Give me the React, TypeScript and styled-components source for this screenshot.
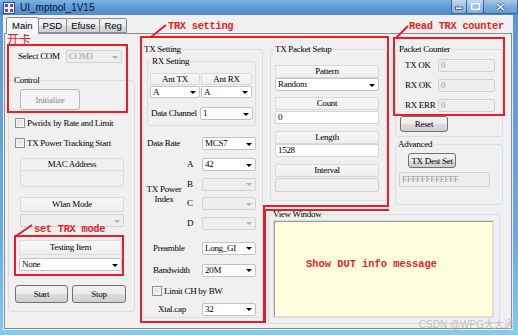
import React from 'react';
import styled, { createGlobalStyle } from 'styled-components';

const GlobalStyle = createGlobalStyle`
  html, body { margin: 0; padding: 0; background: #ffffff; }
  body {
    font-family: "Liberation Serif", "Times New Roman", serif;
    font-size: 9px;
    letter-spacing: -0.3px;
    color: #000;
  }
  * { box-sizing: border-box; }
`;

const Screen = styled.div`
  position: relative;
  width: 518px;
  height: 335px;
  overflow: hidden;
  display: flex;
  flex-direction: column;
  background: linear-gradient(180deg, #5b98d6 0%, #69a9e0 70%, #7fcdf2 100%);
`;

/* ---------- title bar ---------- */
const TitleBar = styled.div`
  height: 15px;
  flex-shrink: 0;
  display: flex;
  align-items: center;
  padding-left: 3px;
  background: linear-gradient(180deg, #7db2e6 0%, #5a97d6 55%, #4d8bcf 100%);
`;

const TitleText = styled.span`
  margin-left: 5px;
  font-family: "Liberation Sans", Arial, sans-serif;
  font-size: 10px;
  letter-spacing: 0;
  color: #06152b;
`;

const WinButtons = styled.div`
  margin-left: auto;
  align-self: flex-start;
  display: flex;
  height: 14px;
`;

const WinButton = styled.div<{ $w: number; $close?: boolean }>`
  width: ${p => p.$w}px;
  height: 14px;
  margin-left: -1px;
  border: 1px solid #35669e;
  border-top: none;
  border-radius: ${p => (p.$close ? '0 0 0 3px' : '0 0 3px 3px')};
  background: ${p =>
    p.$close
      ? 'linear-gradient(180deg, #a9c8ea 0%, #7eaadd 50%, #6a99d3 100%)'
      : 'linear-gradient(180deg, #c4dbf3 0%, #9cbfe7 50%, #86b0e0 100%)'};
  display: flex;
  align-items: center;
  justify-content: center;
`;

/* ---------- client + tabs ---------- */
const Client = styled.div`
  flex: 1;
  margin: 0 5px 5px 3px;
  padding: 0 1px 1px 1px;
  background: #f0f0f0;
  display: flex;
  flex-direction: column;
`;

const TabStrip = styled.div`
  height: 18px;
  display: flex;
  align-items: flex-end;
  padding-left: 2px;
`;

const Tab = styled.div<{ $active?: boolean }>`
  height: ${p => (p.$active ? 17 : 15)}px;
  margin-bottom: ${p => (p.$active ? -1 : 0)}px;
  margin-right: -1px;
  padding: ${p => (p.$active ? '2px 5px 0' : '1px 4px 0')};
  position: relative;
  z-index: ${p => (p.$active ? 2 : 1)};
  border: 1px solid #898c95;
  border-bottom: ${p => (p.$active ? 'none' : '1px solid #898c95')};
  border-radius: 2px 2px 0 0;
  background: ${p =>
    p.$active ? '#f7f7f7' : 'linear-gradient(180deg, #f2f2f2 0%, #ebebeb 50%, #dddddd 51%, #cfcfcf 100%)'};
  font-family: "Liberation Sans", Arial, sans-serif;
  font-size: 9.5px;
  letter-spacing: 0;
  line-height: 12px;
`;

const TabPage = styled.div`
  flex: 1;
  border: 1px solid #898c95;
  background: #f0f0f0;
  display: grid;
  grid-template-columns: 132px 130px 125px 116px;
  grid-template-rows: 163px 1fr;
  padding-top: 10px;
  align-items: start;
`;

/* ---------- generic dialog parts ---------- */
const Group = styled.div<{ $mt: number; $ml: number; $w: number; $h: number }>`
  margin-top: ${p => p.$mt}px;
  margin-left: ${p => p.$ml}px;
  width: ${p => p.$w}px;
  height: ${p => p.$h}px;
  border: 1px solid #d5dfe5;
  border-radius: 3px;
  display: flex;
  flex-direction: column;
  align-items: flex-start;
`;

const Legend = styled.span<{ $ml: number }>`
  display: block;
  margin: -6px 0 0 ${p => p.$ml}px;
  padding: 0 1px;
  height: 11px;
  line-height: 11px;
  background: #f0f0f0;
  white-space: nowrap;
`;

const Row = styled.div<{ $mt?: number; $ml?: number; $h?: number }>`
  display: flex;
  align-items: center;
  margin-top: ${p => p.$mt ?? 0}px;
  margin-left: ${p => p.$ml ?? 0}px;
  height: ${p => p.$h ?? 13}px;
  flex-shrink: 0;
`;

const RowLabel = styled.span<{ $w: number }>`
  width: ${p => p.$w}px;
  flex-shrink: 0;
  white-space: nowrap;
  line-height: 11px;
`;

const Combo = styled.div<{ $w: number; $h?: number; $disabled?: boolean }>`
  position: relative;
  width: ${p => p.$w}px;
  height: ${p => p.$h ?? 13}px;
  flex-shrink: 0;
  border: 1px solid ${p => (p.$disabled ? '#d2d2d2' : '#c3c3c3')};
  border-radius: 2px;
  background: ${p => (p.$disabled ? '#eeeeee' : '#ffffff')};
  color: ${p => (p.$disabled ? '#a3a3a3' : '#000')};
  padding-left: 2px;
  line-height: ${p => (p.$h ?? 13) - 2}px;
  white-space: nowrap;
  &::after {
    content: '';
    position: absolute;
    right: 3px;
    top: 50%;
    margin-top: -1px;
    border-left: 3px solid transparent;
    border-right: 3px solid transparent;
    border-top: 3px solid ${p => (p.$disabled ? '#b0b0b0' : '#000')};
  }
`;

const TextBox = styled.div<{ $w: number; $h?: number; $disabled?: boolean }>`
  width: ${p => p.$w}px;
  height: ${p => p.$h ?? 13}px;
  flex-shrink: 0;
  border: 1px solid ${p => (p.$disabled ? '#cfcfcf' : '#d6d6d6')};
  border-radius: ${p => (p.$disabled ? 2 : 0)}px;
  background: ${p => (p.$disabled ? '#efefef' : '#ffffff')};
  color: ${p => (p.$disabled ? '#9a9a9a' : '#000')};
  padding-left: 2px;
  line-height: ${p => (p.$h ?? 13) - 2}px;
  white-space: nowrap;
`;

const Header = styled.div<{ $w: number; $h?: number }>`
  width: ${p => p.$w}px;
  height: ${p => p.$h ?? 13}px;
  flex-shrink: 0;
  border: 1px solid #dadada;
  border-radius: 2px;
  background: linear-gradient(180deg, #f7f7f7 0%, #efefef 100%);
  text-align: center;
  line-height: ${p => (p.$h ?? 13) - 2}px;
  white-space: nowrap;
`;

const StackBox = styled.div<{ $mt: number; $ml: number; $w: number }>`
  margin-top: ${p => p.$mt}px;
  margin-left: ${p => p.$ml}px;
  width: ${p => p.$w}px;
  display: flex;
  flex-direction: column;
  flex-shrink: 0;
`;

const MacBox = styled.div`
  width: 104px;
  border: 1px solid #dadada;
  border-radius: 3px;
  background: #f0f0f0;
`;

const MacHead = styled.div`
  height: 12px;
  line-height: 11px;
  text-align: center;
  border-bottom: 1px solid #dadada;
`;

const MacBody = styled.div`
  height: 15px;
`;

const Button = styled.div<{ $w: number; $h: number; $disabled?: boolean }>`
  width: ${p => p.$w}px;
  height: ${p => p.$h}px;
  flex-shrink: 0;
  border: 1px solid ${p => (p.$disabled ? '#b5b9bc' : '#707070')};
  border-radius: 3px;
  background: ${p =>
    p.$disabled
      ? '#f4f4f4'
      : 'linear-gradient(180deg, #f2f2f2 0%, #ebebeb 50%, #dddddd 51%, #cfcfcf 100%)'};
  color: ${p => (p.$disabled ? '#8a8a8a' : '#000')};
  display: flex;
  align-items: center;
  justify-content: center;
  white-space: nowrap;
`;

const CheckBox = styled.span`
  width: 10px;
  height: 10px;
  margin-right: 2px;
  flex-shrink: 0;
  border: 1px solid #8e8f8f;
  background: linear-gradient(135deg, #dcdcdc 0%, #f6f6f6 100%);
  box-shadow: inset 0 0 0 1px #f4f4f4;
`;

/* ---------- columns ---------- */
const LeftCol = styled.div`
  grid-column: 1;
  grid-row: 1 / 3;
  margin-left: 3px;
  width: 127px;
  display: flex;
  flex-direction: column;
  align-items: flex-start;
`;

const RightCol = styled.div`
  grid-column: 4;
  grid-row: 1;
  display: flex;
  flex-direction: column;
  align-items: flex-start;
`;

const TxSetting = styled(Group)`
  grid-column: 2;
  grid-row: 1 / 3;
`;

const PacketSetup = styled(Group)`
  grid-column: 3;
  grid-row: 1;
`;

const ViewGroup = styled(Group)`
  grid-column: 3 / 5;
  grid-row: 2;
`;

const PowerBlock = styled.div`
  display: flex;
  align-items: center;
  margin-top: 8px;
  margin-left: 4px;
`;

const PowerLabel = styled.div`
  width: 36px;
  text-align: center;
  line-height: 10px;
`;

const PowerRows = styled.div`
  display: flex;
  flex-direction: column;
  gap: 6.5px;
`;

const Letter = styled.span`
  width: 20px;
  padding-left: 5px;
  line-height: 11px;
`;

const ViewBox = styled.div`
  margin: 1px 0 0 5px;
  width: 219px;
  height: 96px;
  background: #ffffdf;
  border: 1px solid;
  border-color: #9b9b9b #e2e2e2 #e2e2e2 #9b9b9b;
  box-shadow: 0 0 0 1px #dcdcdc;
`;

const DutText = styled.div`
  margin: 36px 0 0 31px;
  font-family: "Liberation Mono", "Courier New", monospace;
  font-weight: bold;
  font-size: 10.4px;
  letter-spacing: 0;
  color: #f0202a;
`;

/* ---------- annotations ---------- */
const Overlay = styled.svg`
  position: absolute;
  left: 0;
  top: 0;
  width: 518px;
  height: 335px;
  pointer-events: none;
`;

const Watermark = styled.div`
  position: absolute;
  right: 4px;
  bottom: 4px;
  font-family: "Liberation Sans", "Noto Sans CJK SC", sans-serif;
  font-size: 10px;
  letter-spacing: 0;
  color: rgba(185, 185, 185, 0.9);
`;

const RED = '#ee1d25';

const AppIcon = () => (
  <svg width="12" height="12" viewBox="0 0 12 12">
    <rect x="0.5" y="0.5" width="11" height="11" fill="#e8eef8" stroke="#2c4f8a" />
    <rect x="2" y="2" width="3" height="3" fill="#2a62c4" />
    <rect x="7" y="2" width="3" height="3" fill="#d23a2a" />
    <rect x="2" y="7" width="3" height="3" fill="#d23a2a" />
    <rect x="7" y="7" width="3" height="3" fill="#2a62c4" />
  </svg>
);

const Annotations = () => (
  <Overlay viewBox="0 0 518 335">
    <g fill="none" stroke={RED} strokeWidth="2">
      <rect x="8" y="45" width="119" height="67" />
      <polygon points="141,37 388,37 388,206 264,206 264,322 141,322" />
      <polyline points="389,210 265,210 265,323" />
      <rect x="394" y="38" width="110" height="77" />
      <rect x="15" y="236" width="108" height="39" />
      <line x1="151" y1="37" x2="166" y2="25" />
      <line x1="396" y1="38" x2="408" y2="26" />
      <line x1="16" y1="236" x2="32" y2="225" />
    </g>
    <g fill={RED} fontFamily='"Liberation Mono", "Courier New", monospace' fontWeight="bold" fontSize="10.4">
      <text x="168" y="29">TRX setting</text>
      <text x="409" y="29">Read TRX counter</text>
      <text x="34" y="232">set TRX mode</text>
    </g>
    <text x="7" y="43.5" fill={RED} fontFamily='"Noto Sans CJK SC", sans-serif' fontSize="12">开卡</text>
  </Overlay>
);

export default function App() {
  return (
    <>
      <GlobalStyle />
      <Screen>
        <TitleBar>
          <AppIcon />
          <TitleText>UI_mptool_1V15</TitleText>
          <WinButtons>
            <WinButton $w={16}>
              <svg width="8" height="6" viewBox="0 0 8 6">
                <rect x="0.5" y="3" width="7" height="2.5" fill="#fff" stroke="#2d4d78" strokeWidth="0.8" />
              </svg>
            </WinButton>
            <WinButton $w={18}>
              <svg width="9" height="7" viewBox="0 0 9 7">
                <rect x="0.5" y="0.5" width="8" height="6" fill="none" stroke="#fff" strokeWidth="1.5" />
              </svg>
            </WinButton>
            <WinButton $w={35} $close>
              <svg width="9" height="8" viewBox="0 0 9 8">
                <path d="M1 1 L8 7 M8 1 L1 7" stroke="#2d4d78" strokeWidth="2.6" />
                <path d="M1 1 L8 7 M8 1 L1 7" stroke="#fff" strokeWidth="1.6" />
              </svg>
            </WinButton>
          </WinButtons>
        </TitleBar>

        <Client>
          <TabStrip>
            <Tab $active>Main</Tab>
            <Tab>PSD</Tab>
            <Tab>Efuse</Tab>
            <Tab>Reg</Tab>
          </TabStrip>

          <TabPage>
            <LeftCol>
              <Row $mt={6} $ml={10}>
                <RowLabel $w={48}>Select COM</RowLabel>
                <Combo $w={56} $disabled>COM3</Combo>
              </Row>
              <Group $mt={17} $ml={0} $w={127} $h={232}>
                <Legend $ml={4}>Control</Legend>
                <Row $mt={3} $ml={11} $h={21}>
                  <Button $w={60} $h={21} $disabled>Initialize</Button>
                </Row>
                <Row $mt={7} $ml={6} $h={11}>
                  <CheckBox />
                  <span>Pwridx by Rate and Limit</span>
                </Row>
                <Row $mt={9} $ml={6} $h={11}>
                  <CheckBox />
                  <span>TX Power Tracking Start</span>
                </Row>
                <StackBox $mt={10} $ml={11} $w={104}>
                  <MacBox>
                    <MacHead>MAC Address</MacHead>
                    <MacBody />
                  </MacBox>
                </StackBox>
                <StackBox $mt={10} $ml={11} $w={104}>
                  <Header $w={104} $h={15}>Wlan Mode</Header>
                  <Row $mt={2}>
                    <Combo $w={104} $disabled />
                  </Row>
                </StackBox>
                <StackBox $mt={13} $ml={10} $w={103}>
                  <Header $w={103} $h={15}>Testing Item</Header>
                  <Row $mt={3}>
                    <Combo $w={103}>None</Combo>
                  </Row>
                </StackBox>
                <Row $mt={14} $ml={6} $h={18}>
                  <Button $w={53} $h={18}>Start</Button>
                  <Button $w={54} $h={18} style={{ marginLeft: 4 }}>Stop</Button>
                </Row>
              </Group>
            </LeftCol>

            <TxSetting $mt={5} $ml={4} $w={122} $h={269}>
              <Legend $ml={1}>TX Setting</Legend>
              <Group $mt={6} $ml={5} $w={109} $h={65}>
                <Legend $ml={3}>RX Setting</Legend>
                <Row $mt={6} $ml={2} $h={12}>
                  <Header $w={50} $h={12}>Ant TX</Header>
                  <Header $w={51} $h={12} style={{ marginLeft: 1 }}>Ant RX</Header>
                </Row>
                <Row $mt={1} $ml={2} $h={12}>
                  <Combo $w={50} $h={12}>A</Combo>
                  <Combo $w={51} $h={12} style={{ marginLeft: 1 }}>A</Combo>
                </Row>
                <Row $mt={9} $ml={3}>
                  <RowLabel $w={49}>Data Channel</RowLabel>
                  <Combo $w={53}>1</Combo>
                </Row>
              </Group>
              <Row $mt={11} $ml={5}>
                <RowLabel $w={55}>Data Rate</RowLabel>
                <Combo $w={54}>MCS7</Combo>
              </Row>
              <PowerBlock>
                <PowerLabel>
                  TX Power
                  <br />
                  Index
                </PowerLabel>
                <PowerRows>
                  <Row>
                    <Letter>A</Letter>
                    <Combo $w={54}>42</Combo>
                  </Row>
                  <Row>
                    <Letter>B</Letter>
                    <Combo $w={54} $disabled />
                  </Row>
                  <Row>
                    <Letter>C</Letter>
                    <Combo $w={54} $disabled />
                  </Row>
                  <Row>
                    <Letter>D</Letter>
                    <Combo $w={54} $disabled />
                  </Row>
                </PowerRows>
              </PowerBlock>
              <Row $mt={12} $ml={11}>
                <RowLabel $w={49}>Preamble</RowLabel>
                <Combo $w={54}>Long_GI</Combo>
              </Row>
              <Row $mt={9} $ml={11}>
                <RowLabel $w={49}>Bandwidth</RowLabel>
                <Combo $w={54}>20M</Combo>
              </Row>
              <Row $mt={9} $ml={10} $h={11}>
                <CheckBox />
                <span>Limit CH by BW</span>
              </Row>
              <Row $mt={6} $ml={16}>
                <RowLabel $w={44}>Xtal.cap</RowLabel>
                <Combo $w={54}>32</Combo>
              </Row>
            </TxSetting>

            <PacketSetup $mt={5} $ml={3} $w={117} $h={152}>
              <Legend $ml={3}>TX Packet Setup</Legend>
              <StackBox $mt={10} $ml={4} $w={104}>
                <Header $w={104}>Pattern</Header>
                <Combo $w={104}>Random</Combo>
              </StackBox>
              <StackBox $mt={6} $ml={4} $w={104}>
                <Header $w={104}>Count</Header>
                <Row $mt={1}>
                  <TextBox $w={104}>0</TextBox>
                </Row>
              </StackBox>
              <StackBox $mt={7} $ml={4} $w={104}>
                <Header $w={104}>Length</Header>
                <TextBox $w={104}>1528</TextBox>
              </StackBox>
              <StackBox $mt={7} $ml={4} $w={104}>
                <Header $w={104}>Interval</Header>
                <Row $mt={1} $h={14}>
                  <TextBox $w={104} $h={14} $disabled />
                </Row>
              </StackBox>
            </PacketSetup>

            <RightCol>
              <Group $mt={5} $ml={3} $w={108} $h={88}>
                <Legend $ml={2}>Packet Counter</Legend>
                <Row $mt={4} $ml={9}>
                  <RowLabel $w={33}>TX OK</RowLabel>
                  <TextBox $w={57} $disabled>0</TextBox>
                </Row>
                <Row $mt={7} $ml={9}>
                  <RowLabel $w={33}>RX OK</RowLabel>
                  <TextBox $w={57} $disabled>0</TextBox>
                </Row>
                <Row $mt={7} $ml={9}>
                  <RowLabel $w={33}>RX ERR</RowLabel>
                  <TextBox $w={57} $disabled>0</TextBox>
                </Row>
                <Row $mt={4} $ml={4} $h={16}>
                  <Button $w={48} $h={16}>Reset</Button>
                </Row>
              </Group>
              <Group $mt={7} $ml={3} $w={108} $h={61}>
                <Legend $ml={1}>Advanced</Legend>
                <Row $mt={3} $ml={12} $h={15}>
                  <Button $w={48} $h={15}>TX Dest Set</Button>
                </Row>
                <Row $mt={4} $ml={3} $h={15}>
                  <TextBox $w={91} $h={15} $disabled>FFFFFFFFFFFF</TextBox>
                </Row>
              </Group>
            </RightCol>

            <ViewGroup $mt={7} $ml={1} $w={232} $h={110}>
              <Legend $ml={3}>View Window</Legend>
              <ViewBox>
                <DutText>Show DUT info message</DutText>
              </ViewBox>
            </ViewGroup>
          </TabPage>
        </Client>

        <Annotations />
        <Watermark>CSDN @WPG大大通</Watermark>
      </Screen>
    </>
  );
}
